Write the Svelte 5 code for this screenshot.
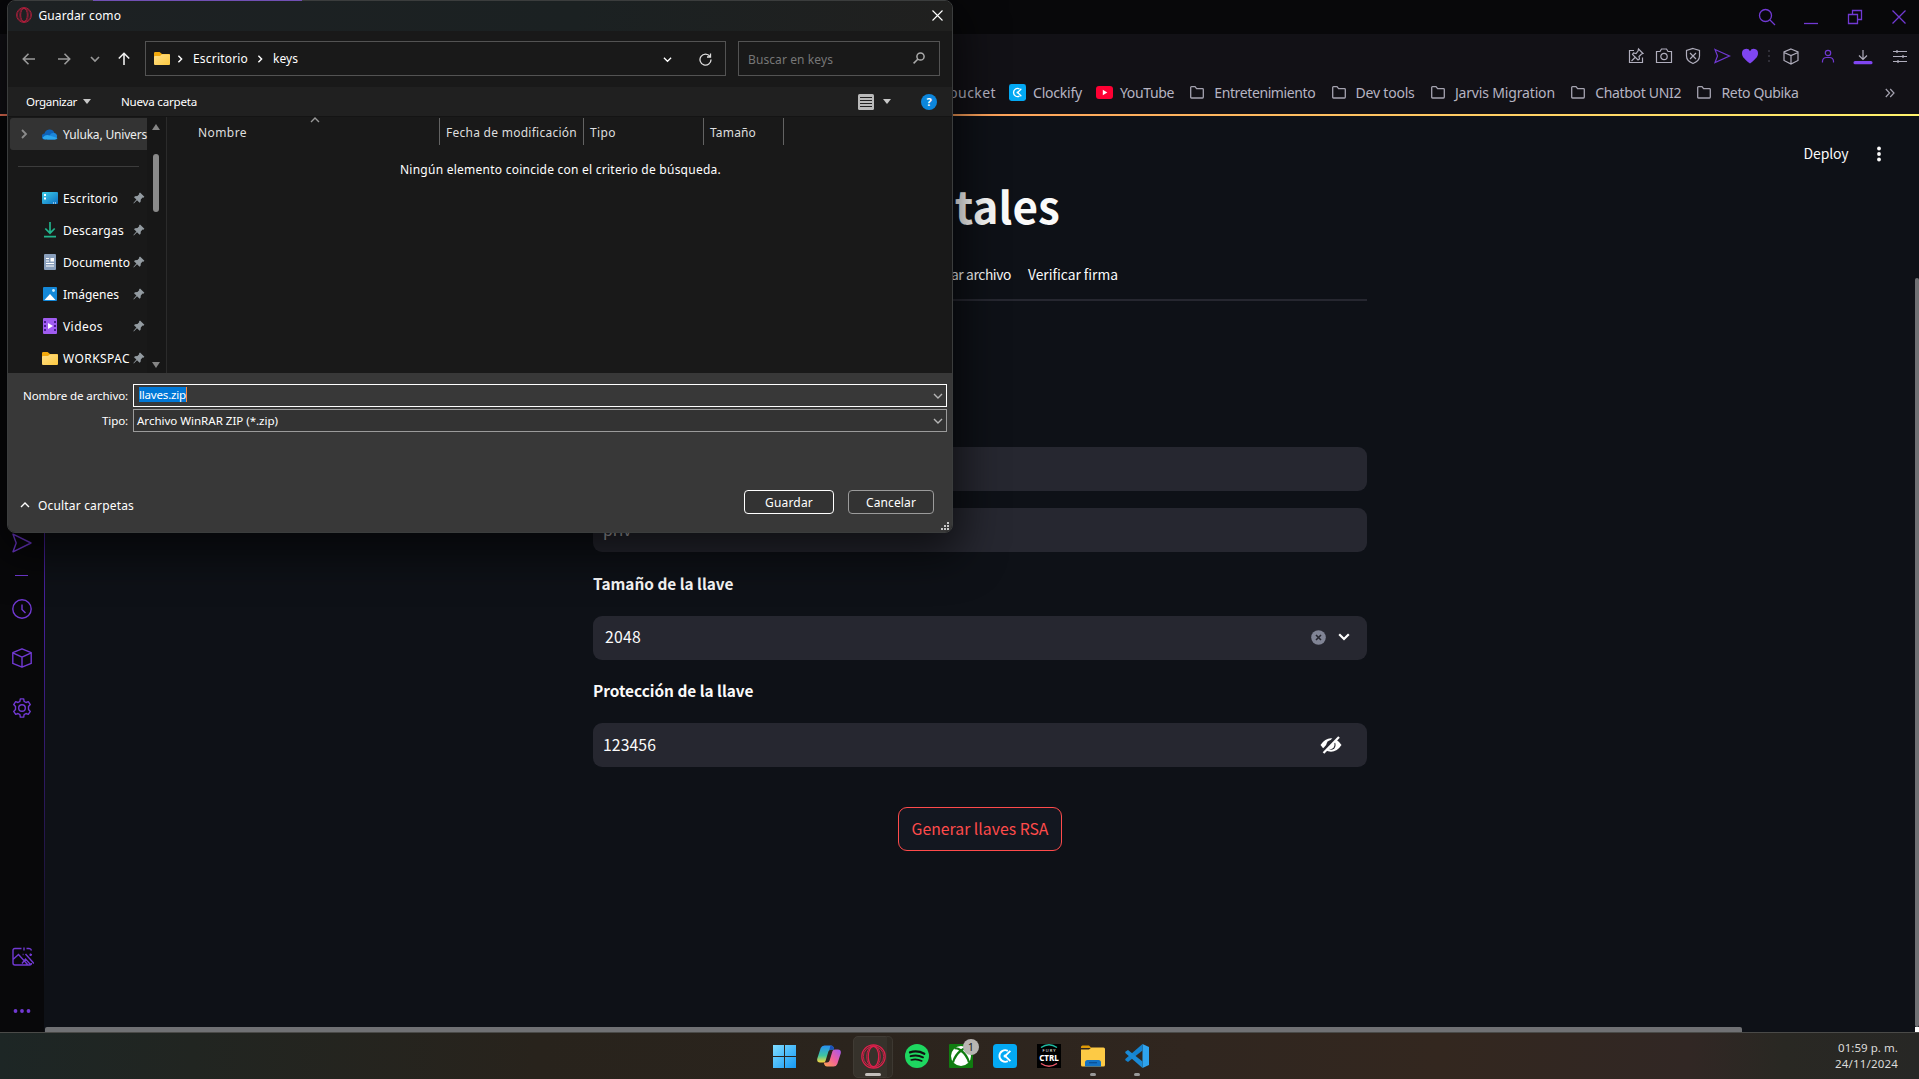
<script>
  const bookmarks = [
    { kind: 'clockify', label: 'Clockify', w: 49 },
    { kind: 'youtube', label: 'YouTube', w: 54 },
    { kind: 'folder', label: 'Entretenimiento', w: 101 },
    { kind: 'folder', label: 'Dev tools', w: 59 },
    { kind: 'folder', label: 'Jarvis Migration', w: 100 },
    { kind: 'folder', label: 'Chatbot UNI2', w: 86 },
    { kind: 'folder', label: 'Reto Qubika', w: 77 }
  ];
  const places = [
    { icon: 'desktop', label: 'Escritorio', w: 55 },
    { icon: 'download', label: 'Descargas', w: 61 },
    { icon: 'doc', label: 'Documento', w: 67 },
    { icon: 'image', label: 'Imágenes', w: 56 },
    { icon: 'video', label: 'Videos', w: 40 },
    { icon: 'folder', label: 'WORKSPAC', w: 67 }
  ];

  // Tracks a label so that it occupies the given width in pixels.
  function fit(node, width) {
    node.style.letterSpacing = '0px';
    const natural = node.getBoundingClientRect().width;
    const count = node.textContent.length;
    node.style.letterSpacing = (width - natural) / count + 'px';
  }
</script>

{#snippet folder()}
  <svg width="16" height="13" viewBox="0 0 16 13">
    <defs><linearGradient id="fg" x1="0" y1="0" x2="1" y2="1"><stop offset="0" stop-color="#ffe08a" /><stop offset="1" stop-color="#fdc940" /></linearGradient></defs>
    <path d="M0 1.2Q0 0 1.2 0H5.6L8 2H15Q16 2 16 3V6H0Z" fill="#f2a90c" />
    <path d="M0 5Q0 4 1 4H6L8 2.2H15Q16 2.2 16 3.2V12Q16 13 15 13H1Q0 13 0 12Z" fill="url(#fg)" />
  </svg>
{/snippet}

{#snippet send(s)}
  <svg width={s} height={s} viewBox="0 0 20 20" fill="none" stroke="#7139d3" stroke-width="1.4" stroke-linejoin="round"><path d="M1 1.2 19 10 1 18.8 4.2 10Z" /></svg>
{/snippet}

{#snippet cube(s, c)}
  <svg width={s} height={s} viewBox="0 0 20 20" fill="none" stroke={c} stroke-width="1.3" stroke-linejoin="round"><path d="M10 .8 19.2 4.6V15.4L10 19.2.8 15.4V4.6ZM.8 4.8 10 9.2 19.2 4.8M10 9.2V19" /></svg>
{/snippet}

{#snippet clockMark(s)}
  <svg width={s} height={s} viewBox="0 0 24 24"><rect width="24" height="24" rx="3.5" fill="#03a9f4" /><path d="M14.8 6.8A5.8 5.8 0 1 0 14.8 17.200" fill="none" stroke="#fff" stroke-width="1.9" /><path d="M12.600 11.600 17.400 6.800M12.600 12.400 17.400 17.200" stroke="#fff" stroke-width="1.800" /><circle cx="12" cy="12" r="1.5" fill="#fff" /></svg>
{/snippet}

{#snippet opera(s, c)}
  <svg width={s} height={s} viewBox="0 0 24 24" fill="none" stroke={c} stroke-width="1.2"><circle cx="12" cy="12" r="11.2" /><circle cx="12" cy="12" r="9.8" stroke-width=".8" /><ellipse cx="12" cy="12" rx="5" ry="9.8" /><ellipse cx="12" cy="12" rx="6.5" ry="10.6" stroke-width=".8" /></svg>
{/snippet}

{#snippet pin()}
  <svg class="pin" width="12" height="12" viewBox="0 0 12 12" fill="#939ba1"><path d="M7 .4 11.4 4.8 10.4 5.8 9.6 5.6 7.8 7.4 7.6 9.8 6.6 10.8 4 8.2.8 11.4.4 11 3.4 7.6 1 5.2 2 4.2 4.4 4 6.2 2.2 6 1.4Z" /></svg>
{/snippet}

{#snippet chev(cls)}
  <svg class={cls} width="10" height="10" viewBox="0 0 10 10" fill="none" stroke="currentColor" stroke-width="1.4"><path d="M1 3 5 7 9 3" /></svg>
{/snippet}

<div class="desktop">
  <div class="tabbar">
    <div class="tabmark"></div>
    <div class="winctl">
      <svg width="18" height="18" viewBox="0 0 18 18"><circle cx="7.5" cy="7.5" r="6" /><path d="M12 12 17 17" /></svg>
      <svg width="18" height="18" viewBox="0 0 18 18"><path d="M2 15.5H16" /></svg>
      <svg width="18" height="18" viewBox="0 0 18 18"><path d="M2.5 6.5H11.500V15.500H2.500ZM6.500 6V2.500H15.500V11.500H12" /></svg>
      <svg width="18" height="18" viewBox="0 0 18 18"><path d="M2.500 2.500 15.500 15.500M15.500 2.500 2.500 15.500" /></svg>
    </div>
  </div>

  <div class="nav">
    <div class="tools">
      <svg viewBox="0 0 20 20"><path d="M8 4.500H3.500V16.500H16.500V11.500M12.500 3 17 7.500 15.500 8 13 10.500 13.500 13 12 14 6.500 8.500 7.500 7 10 7.500 12 5ZM9 11.500 5.500 15" /></svg>
      <svg viewBox="0 0 20 20"><path d="M2.500 5.500H6L7.500 3H12.500L14 5.500H17.500V16.500H2.500Z" /><circle cx="10" cy="10.500" r="3.200" /></svg>
      <svg viewBox="0 0 20 20"><path d="M10 2.500 16.500 4.500V10Q16.500 15 10 17.500 3.500 15 3.500 10V4.500ZM7 7 13 13M13 7 7 13" /></svg>
      <svg class="vio" viewBox="0 0 20 20"><path d="M3 3.500 17.500 10 3 16.500 5.500 10Z" /></svg>
      <svg class="heart" viewBox="0 0 20 20"><path d="M10 17.500C3 12 2 10 2 7.200A4.200 4.200 0 0 1 10 5.200 4.200 4.200 0 0 1 18 7.200C18 10 17 12 10 17.500Z" /></svg>
      <i class="vdots"></i>
      <svg viewBox="0 0 20 20"><path d="M10 3 17 6V14.500L10 18 3 14.500V6ZM3 6.500 10 9.500 17 6.500M10 9.500V17.500" /></svg>
      <svg class="vio" viewBox="0 0 20 20"><circle cx="10" cy="7" r="2.700" /><path d="M4.500 16.500V15A4 4 0 0 1 8.500 11.500H11.500A4 4 0 0 1 15.500 15V16.500" /></svg>
      <svg viewBox="0 0 20 20"><path d="M10 4V13M6 9.500 10 13.500 14 9.500" /><rect class="bar" x=".5" y="15" width="19" height="3.200" rx="1.500" /></svg>
      <svg viewBox="0 0 20 20"><path d="M3 5.500H17M3 10.500H17M3 15.500H17M7 4V7M13 9V12M8 14V17" /></svg>
    </div>
    <div class="marks">
      <span class="mark tail"><span use:fit={66}>Bitbucket</span></span>
      {#each bookmarks as b}
        <span class="mark {b.kind}">
          {#if b.kind === 'clockify'}{@render clockMark(17)}
          {:else if b.kind === 'youtube'}<svg width="17" height="13" viewBox="0 0 17 13"><rect width="17" height="13" rx="3" fill="#ff0033" /><path d="M6.800 3.800V9.200L11.300 6.500Z" fill="#fff" /></svg>
          {:else}<svg width="14" height="13" viewBox="0 0 14 13"><path d="M.7 1.500Q.7.700 1.500.700H5L6.600 2.700H12.500Q13.300 2.700 13.300 3.500V11Q13.300 12 12.500 12H1.500Q.7 12 .7 11Z" fill="none" stroke="#a5a3b0" stroke-width="1.300" /></svg>{/if}
          <span use:fit={b.w}>{b.label}</span>
        </span>
      {/each}
      <svg class="more" width="10" height="10" viewBox="0 0 10 10" fill="none" stroke="#a5a3b0" stroke-width="1.200"><path d="M.8 1 4.600 5 .8 9M5.200 1 9 5 5.200 9" /></svg>
    </div>
  </div>
  <div class="rule"></div>

  <div class="body">
    <div class="side">
      <div class="s-send">{@render send(20)}</div>
      <div class="dash"></div>
      <svg width="20" height="20" viewBox="0 0 20 20"><circle cx="10" cy="10" r="9.200" /><path d="M10 5.500V10.500L13.500 14" /></svg>
      {@render cube(20, '#7139d3')}
      <svg width="20" height="20" viewBox="0 0 20 20"><circle cx="10" cy="10" r="3.300" /><path d="M8.300.900H11.700L12.100 3.400 14 4.500 16.300 3.600 18.300 6.600 16.500 8.500V11.500L18.300 13.400 16.300 16.400 14 15.500 12.100 16.600 11.700 19.100H8.300L7.900 16.600 6 15.500 3.700 16.400 1.700 13.400 3.500 11.500V8.500L1.700 6.600 3.700 3.600 6 4.500 7.900 3.400Z" stroke-linejoin="round" /></svg>
      <svg class="pic" width="22" height="20" viewBox="0 0 22 20"><path d="M9.500 1.500H3Q1 1.500 1 3.500V16Q1 18 3 18H17.500Q19.500 18 19.500 16M1 12.500 6.500 7.500 16 18M10 16.500 13.500 12 18.500 17.500M13.500 7 22 16.500M14.500 1.500H17Q19 1.500 19.500 3.500M12 .500V3.500M10.700 7.500H11.500M18.500 6.500V9M17.500 7.800H20" /></svg>
      <svg class="dots" width="20" height="6" viewBox="0 0 20 6"><circle cx="3.500" cy="3" r="1.900" /><circle cx="10" cy="3" r="1.900" /><circle cx="16.500" cy="3" r="1.900" /></svg>
    </div>

    <div class="page">
      <div class="head">
        <span use:fit={45}>Deploy</span>
        <svg width="4" height="16" viewBox="0 0 4 16" fill="#fafafa"><circle cx="2" cy="2.500" r="1.900" /><circle cx="2" cy="8" r="1.900" /><circle cx="2" cy="13.500" r="1.900" /></svg>
      </div>
      <main>
        <h1><span use:fit={187}>digitales</span></h1>
        <div class="tabs"><span use:fit={88}>Firmar archivo</span><span use:fit={90}>Verificar firma</span></div>
        <div class="field first"></div>
        <div class="field second"><span>priv</span></div>
        <div class="label"><span use:fit={140.5}>Tamaño de la llave</span></div>
        <div class="field select">
          <span use:fit={36}>2048</span>
          <svg width="15" height="15" viewBox="0 0 15 15"><circle cx="7.500" cy="7.500" r="7.300" fill="#808495" /><path d="M5 5 10 10M10 5 5 10" stroke="#262730" stroke-width="1.600" /></svg>
          <svg width="12" height="8" viewBox="0 0 12 8"><path d="M1.200 1.200 6 6 10.800 1.200" fill="none" stroke="#fff" stroke-width="2.200" /></svg>
        </div>
        <div class="label prot"><span use:fit={160.5}>Protección de la llave</span></div>
        <div class="field pass">
          <span use:fit={53}>123456</span>
          <svg width="22" height="18" viewBox="0 0 22 18"><path d="M.5 9Q5 2.200 11 2.200T21.500 9Q17 15.800 11 15.800T.5 9Z" fill="#fff" /><ellipse cx="11" cy="9" rx="4.600" ry="4.800" fill="#262730" /><path d="M7.500 14.500 14 6.500Q15.500 10 12.500 12.500Z" fill="#fff" /><path d="M2 16.500 17.500-.5" stroke="#262730" stroke-width="4" /><path d="M3.500 17 19 1" stroke="#fff" stroke-width="2.200" /></svg>
        </div>
        <div class="gen"><button><span use:fit={137}>Generar llaves RSA</span></button></div>
      </main>
      <div class="hscroll"></div>
      <div class="vscroll"></div>
      <div class="corner"></div>
    </div>
  </div>

  <div class="taskbar">
    <div class="apps">
      <div class="app"><svg width="23" height="23" viewBox="0 0 23 23"><defs><linearGradient id="wn" x1="0" y1="0" x2="1" y2="1"><stop offset="0" stop-color="#7fdcff" /><stop offset="1" stop-color="#1599f5" /></linearGradient></defs><path d="M0 0H11V11H0ZM12 0H23V11H12ZM0 12H11V23H0ZM12 12H23V23H12Z" fill="url(#wn)" /></svg></div>
      <div class="app"><svg width="24" height="24" viewBox="0 0 24 24">
        <defs>
          <linearGradient id="ca" x1="0" y1="0" x2="0" y2="1"><stop offset="0" stop-color="#2790f5" /><stop offset=".6" stop-color="#3fc5a0" /><stop offset="1" stop-color="#ffd83a" /></linearGradient>
          <linearGradient id="cb" x1="1" y1="0" x2="0" y2="1"><stop offset="0" stop-color="#a358f0" /><stop offset=".5" stop-color="#f0609c" /><stop offset="1" stop-color="#ffa64a" /></linearGradient>
        </defs>
        <path d="M7.500 1.500H14Q16 1.500 16.700 3.500L17.200 5.500H14Q12 5.500 11.400 7.500L8.500 17Q7.900 18.500 6 18.500H3Q-.5 18.500.3 14.500L3.700 4Q4.700 1.500 7.500 1.500Z" fill="url(#ca)" />
        <path d="M16.500 22.500H10Q8 22.500 7.300 20.500L6.800 18.500H10Q12 18.500 12.600 16.500L15.500 7Q16.100 5.500 18 5.500H21Q24.500 5.500 23.700 9.500L20.300 20Q19.300 22.500 16.500 22.500Z" fill="url(#cb)" />
        <path d="M14 1.500Q16 1.500 16.700 3.500L17.300 5.500H14.500Q12.500 5.500 12 7L13.500 1.500Z" fill="#1d4fb8" />
      </svg></div>
      <div class="app active">{@render opera(25, '#e01f4c')}<i class="ind wide"></i></div>
      <div class="app"><svg width="24" height="24" viewBox="0 0 24 24"><circle cx="12" cy="12" r="12" fill="#1ed760" /><g fill="none" stroke="#111" stroke-linecap="round"><path d="M5 8.300Q12.500 6 19.300 9.700" stroke-width="2.300" /><path d="M5.600 12.200Q12 10.300 18 13.300" stroke-width="1.900" /><path d="M6.200 15.900Q11.800 14.400 16.800 17" stroke-width="1.600" /></g></svg></div>
      <div class="app xbox"><svg width="24" height="24" viewBox="0 0 24 24"><rect width="24" height="24" rx="1" fill="#107c10" /><circle cx="12" cy="12" r="10" fill="#fff" /><path d="M5.500 4.500Q8 3.500 12 6.500 16 3.500 18.500 4.500M12 6.500Q6 11 4 18.500M12 6.500Q18 11 20 18.500" stroke="#107c10" stroke-width="2.200" fill="none" /></svg><b>1</b></div>
      <div class="app">{@render clockMark(24)}</div>
      <div class="app"><div class="ctrl"><svg width="18" height="4" viewBox="0 0 18 4"><path d="M1 3.500Q9-2 17 3.500" fill="none" stroke="#1fb9a0" stroke-width="1.400" /></svg><small>F U R Y</small><strong>CTRL</strong><svg width="18" height="4" viewBox="0 0 18 4"><path d="M1 .5Q9 6 17 .5" fill="none" stroke="#ec5a6a" stroke-width="1.400" /></svg></div></div>
      <div class="app"><svg width="24" height="24" viewBox="0 0 24 24"><path d="M0 3Q0 1.500 1.500 1.500H8L10.500 4H0Z" fill="#e09a06" /><path d="M0 5.500H8L10.500 3.500H22.500Q24 3.500 24 5V21Q24 22.500 22.500 22.500H1.500Q0 22.500 0 21Z" fill="#fdca45" /><path d="M4 22.500V18.500Q4 16 6.500 16H17.500Q20 16 20 18.500V22.500Z" fill="#1272c4" /><path d="M8 18.700H16" stroke="#0b4d92" stroke-width="1.200" /></svg><i class="ind"></i></div>
      <div class="app"><svg width="24" height="24" viewBox="0 0 24 24"><path d="M17.500 0 24 3V21L17.500 24Z" fill="#2ea3ee" /><path d="M17.500 0V6.500L3 18 .3 16.200V15Z" fill="#1382cf" /><path d="M17.500 24V17.500L3 6 .3 7.800V9Z" fill="#1a8ad6" /></svg><i class="ind"></i></div>
    </div>
    <div class="clock"><span use:fit={60}>01:59 p. m.</span><span use:fit={63}>24/11/2024</span></div>
  </div>

  <div class="dialog">
    <div class="title">
      {@render opera(16, '#c51f40')}
      <span use:fit={82.5}>Guardar como</span>
      <svg class="x" width="11" height="11" viewBox="0 0 11 11" stroke="#fff" stroke-width="1.100"><path d="M.5.500 10.500 10.500M10.500.500.500 10.500" /></svg>
    </div>
    <div class="addr">
      <div class="arrows">
        <svg width="14" height="14" viewBox="0 0 14 14"><path d="M13 7H1.500M6.500 1.800 1.300 7 6.500 12.200" /></svg>
        <svg width="14" height="14" viewBox="0 0 14 14"><path d="M1 7H12.500M7.500 1.800 12.700 7 7.500 12.200" /></svg>
        {@render chev('hist')}
        <svg class="up" width="14" height="14" viewBox="0 0 14 14"><path d="M7 13V1.500M1.800 6.500 7 1.300 12.200 6.500" /></svg>
      </div>
      <div class="path">
        {@render folder()}
        {@render chev('right a')}
        <span use:fit={55}>Escritorio</span>
        {@render chev('right b')}
        <span use:fit={25}>keys</span>
        {@render chev('open')}
        <svg class="refresh" width="13" height="13" viewBox="0 0 13 13" fill="none" stroke="#ddd" stroke-width="1.300"><path d="M11 3.500A5.500 5.500 0 1 0 12 6.500M11.500.500V4H8" /></svg>
      </div>
      <div class="find">
        <span use:fit={85}>Buscar en keys</span>
        <svg width="12" height="12" viewBox="0 0 12 12" fill="none" stroke="#aaa" stroke-width="1.500"><circle cx="7.500" cy="4.500" r="3.600" /><path d="M5 7 .6 11.400" /></svg>
      </div>
    </div>
    <div class="cmd">
      <span use:fit={51}>Organizar</span><i class="tri"></i>
      <span class="new" use:fit={76}>Nueva carpeta</span>
      <svg class="view" width="16" height="16" viewBox="0 0 16 16"><rect width="16" height="16" rx="1.500" fill="#b9b9b9" /><path d="M2 3.500H14M2 6.500H14M2 9.500H14M2 12.500H14" stroke="#202020" /></svg>
      <i class="tri"></i>
      <span class="help">?</span>
    </div>
    <div class="files">
      <div class="tree">
        <div class="entry hot">
          {@render chev('right')}
          <svg width="16" height="11" viewBox="0 0 16 11"><path d="M3 10.500A3 3 0 0 1 2.500 4.500 5.200 5.200 0 0 1 12.300 3.500L9 8Z" fill="#0f62b8" /><path d="M5 10.500 9 4.500 12 3.800A3.500 3.500 0 0 1 13 10.500Z" fill="#1b86db" /><path d="M3.200 10.500Q1 10.500.6 8.500 4 5 7.500 6.500L15.500 9Q14.500 10.500 13 10.500Z" fill="#2ba6ee" /></svg>
          <span use:fit={84}>Yuluka, Univers</span>
        </div>
        <div class="sep"></div>
        {#each places as p}
          <div class="entry">
            <div class="ico">
              {#if p.icon === 'desktop'}<svg width="16" height="12" viewBox="0 0 16 12"><defs><linearGradient id="dk" x1="0" y1="0" x2="1" y2="1"><stop offset="0" stop-color="#3fd0e8" /><stop offset="1" stop-color="#0c6fc4" /></linearGradient></defs><rect width="16" height="12" rx="1" fill="url(#dk)" /><path d="M2 2H4V4H2ZM2 5.500H4V7.500H2Z" fill="#fff" /><path d="M11 11H12M13 11H14" stroke="#fff" /></svg>
              {:else if p.icon === 'download'}<svg width="12" height="16" viewBox="0 0 12 16" fill="none" stroke="#22b38c" stroke-width="1.700"><path d="M6 0V11M1.300 6.500 6 11.200 10.700 6.500M0 14.700H12" /></svg>
              {:else if p.icon === 'doc'}<svg width="12" height="16" viewBox="0 0 12 16"><rect width="12" height="16" rx="1" fill="#8aa0bd" /><path d="M2 4.500H5M2 7H5M2 9.500H10M2 12H10" stroke="#fff" /><rect x="6.500" y="4" width="3.500" height="3.500" fill="#fff" /></svg>
              {:else if p.icon === 'image'}<svg width="14" height="14" viewBox="0 0 14 14"><rect width="14" height="14" rx="1" fill="#1488d8" /><path d="M1.500 13 7 7 12.500 13Z" fill="#fff" /><circle cx="10.500" cy="3.500" r="1.400" fill="#cdeeff" /></svg>
              {:else if p.icon === 'video'}<svg width="14" height="16" viewBox="0 0 14 16"><rect width="14" height="16" rx="1" fill="#a05cf0" /><path d="M1 3H3V5H1ZM1 7H3V9H1ZM1 11H3V13H1ZM11 3H13V5H11ZM11 7H13V9H11ZM11 11H13V13H11Z" fill="#4a1e90" /><path d="M5 5V11L10 8Z" fill="#fff" /></svg>
              {:else}{@render folder()}{/if}
            </div>
            <span use:fit={p.w}>{p.label}</span>
            {@render pin()}
          </div>
        {/each}
      </div>
      <div class="track"><i class="tri top"></i><div class="thumb"></div><i class="tri bot"></i></div>
      <div class="list">
        <div class="cols">
          <div class="c1"><span use:fit={49}>Nombre</span>{@render chev('sort')}</div>
          <div class="c2"><span use:fit={131}>Fecha de modificación</span></div>
          <div class="c3"><span use:fit={26}>Tipo</span></div>
          <div class="c4"><span use:fit={46}>Tamaño</span></div>
        </div>
        <div class="empty"><span use:fit={321}>Ningún elemento coincide con el criterio de búsqueda.</span></div>
      </div>
    </div>
    <div class="foot">
      <div class="row"><label for="fname"><span use:fit={105}>Nombre de archivo:</span></label><div class="combo on" id="fname"><mark><span use:fit={47}>llaves.zip</span></mark>{@render chev('drop')}</div></div>
      <div class="row"><label for="ftype"><span use:fit={26}>Tipo:</span></label><div class="combo" id="ftype"><span use:fit={141}>Archivo WinRAR ZIP (*.zip)</span>{@render chev('drop')}</div></div>
      <div class="actions">
        {@render chev('hide')}
        <span use:fit={96}>Ocultar carpetas</span>
        <button class="ok"><span use:fit={48}>Guardar</span></button>
        <button class="no"><span use:fit={50}>Cancelar</span></button>
      </div>
      <svg class="grip" width="8" height="8" viewBox="0 0 8 8" fill="#c8c8c8"><path d="M6 0H8V2H6ZM3 3H5V5H3ZM6 3H8V5H6ZM0 6H2V8H0ZM3 6H5V8H3ZM6 6H8V8H6Z" /></svg>
    </div>
  </div>
</div>

<style>
  :global(body) { background: #0e1117; overflow: hidden; }
  * { box-sizing: border-box; }
  svg { display: block; flex: none; }
  span { white-space: nowrap; }
  button { background: none; padding: 0; font: inherit; }
  .desktop { position: relative; width: 1919px; height: 1079px; overflow: hidden; display: flex; flex-direction: column; font-family: "Noto Sans", sans-serif; font-size: 12px; }

  .tabbar { height: 34px; background: #08080a; display: flex; align-items: flex-start; }
  .tabmark { margin-left: 93px; width: 209px; height: 1px; background: #7150b4; position: relative; z-index: 2; }
  .winctl { margin: 8px 11px 0 auto; display: flex; gap: 26px; }
  .winctl svg { fill: none; stroke: #7139d3; stroke-width: 1.3; }
  .nav { height: 80px; background: #121116; }
  .tools { display: flex; align-items: center; justify-content: flex-end; height: 44px; padding-right: 9px; }
  .tools svg { width: 20px; height: 20px; fill: none; stroke: #b0aebd; stroke-width: 1.2; margin-left: 8px; }
  .tools svg:nth-child(3), .tools svg:nth-child(4) { margin-left: 9px; }
  .tools svg:nth-child(7) { margin-left: 11px; }
  .tools svg:nth-child(8), .tools svg:nth-child(10) { margin-left: 17px; }
  .tools svg:nth-child(9) { margin-left: 15px; }
  .tools .vio { stroke: #7139d3; }
  .tools .heart { fill: #7f45f0; stroke: none; }
  .tools .bar { fill: #7f45f0; stroke: none; }
  .vdots { width: 2px; height: 12px; margin-left: 8px; background: repeating-linear-gradient(#302f38 0 2px, transparent 2px 5px); }
  .marks { display: flex; align-items: center; height: 29px; padding-left: 930px; font-size: 14px; color: #b6b4c2; }
  .mark { display: flex; align-items: center; }
  .mark.clockify { margin-left: 13px; gap: 7px; }
  .mark.youtube { margin-left: 14px; gap: 7px; }
  .mark.folder { margin-left: 16.3px; gap: 10px; }
  .more { margin-left: auto; margin-right: 24px; }
  .rule { height: 2px; background: linear-gradient(90deg, #ff7a5c, #fda05a 50%, #fff36c); }

  .body { display: flex; height: 916px; background: #0e1117; }
  .side { width: 45px; background: linear-gradient(#08080a, #08080a) 0 0 / 44px 100% no-repeat, linear-gradient(#46209a 55%, #0e1117 95%); padding: 417px 0 0 11.5px; display: flex; flex-direction: column; }
  .side > svg { fill: none; stroke: #7139d3; stroke-width: 1.4; margin-top: 29.5px; }
  .dash { width: 13px; height: 1px; margin: 22px 0 -7px 3px; background: #7139d3; }
  .side > .pic { margin-top: 229px; }
  .side > .dots { margin-top: 41px; fill: #7139d3; stroke: none; }

  .page { position: relative; width: 1874px; height: 916px; font-family: "Noto Sans CJK SC", sans-serif; color: #fafafa; }
  .head { padding: 16px 38px 0 0; height: 60px; display: flex; align-items: center; justify-content: flex-end; gap: 28.5px; font-size: 14px; line-height: 20px; }
  .head span { margin-top: -2px; }
  main { width: 774px; margin-left: 548px; display: flex; flex-direction: column; font-size: 15.8px; line-height: 24px; }
  h1 { margin: -2px 0 0; padding-left: 280px; height: 62px; line-height: 62px; font-size: 44px; font-weight: 700; }
  .tabs { margin-top: 15px; height: 50px; border-bottom: 2px solid #262730; padding: 0 0 2px 330px; display: flex; align-items: center; gap: 17px; font-size: 13.8px; }
  .field { height: 44px; border-radius: 9px; background: #262730; padding: 0 25px 0 10px; display: flex; align-items: center; }
  .first { margin-top: 146px; }
  .second { margin-top: 17px; color: #b9b9bd; }
  .label { height: 64px; display: flex; align-items: center; font-weight: 700; font-size: 15.4px; padding-bottom: 2px; }
  .prot { height: 63px; padding-bottom: 3px; }
  .select { padding: 0 17px 2px 12px; }
  .select svg:first-of-type { margin-left: auto; margin-right: 12px; }
  .pass svg { margin-left: auto; }
  .gen { display: flex; margin: 40px 0 0 305px; }
  .gen button { width: 164px; height: 44px; border: 1px solid #ff4b4b; border-radius: 9px; background: #131720; color: #ff4b4b; line-height: 24px; }
  .hscroll { position: absolute; left: 0; bottom: 0; width: 1697px; height: 5px; background: #707174; border-radius: 2px 2px 0 0; }
  .vscroll { position: absolute; right: 0; top: 162px; width: 4px; height: 749px; background: #707174; border-radius: 2px; }
  .corner { position: absolute; right: 0; bottom: 0; width: 4px; height: 5px; background: #fff; }

  .taskbar { height: 47px; border-top: 1px solid #4a4a48; background: linear-gradient(90deg, #1d2625, #212521 10%, #28231c 28%, #2b241d 45%, #30261f 62%, #33271f 75%, #312724 88%, #292823 93%, #272725); display: flex; justify-content: space-between; }
  .apps { display: flex; margin-left: 763px; }
  .app { position: relative; width: 44px; height: 46px; display: flex; align-items: center; justify-content: center; }
  .app:first-child { padding-right: 1px; }
  .active::before { content: ""; position: absolute; left: 2px; top: 3px; width: 35px; height: 40px; border-radius: 5px; background: #36322b; border: 1px solid #403b34; }
  .active::after { content: ""; position: absolute; left: 36px; top: 3px; width: 5px; height: 40px; border-radius: 0 5px 5px 0; background: #302b24; border: 1px solid #3d3831; border-left: 0; }
  .active svg { position: relative; z-index: 1; }
  .ind { position: absolute; bottom: 3px; width: 6px; height: 3px; border-radius: 2px; background: #999; }
  .ind.wide { width: 16px; background: #c4c0bc; }
  .xbox b { position: absolute; left: 24px; top: 6px; width: 16px; height: 16px; border-radius: 50%; background: #b8b5b2; color: #222; font: 11px/16px "Noto Sans", sans-serif; text-align: center; }
  .ctrl { width: 24px; height: 24px; background: #000; color: #fff; display: flex; flex-direction: column; align-items: center; }
  .ctrl small { font-size: 4px; line-height: 5px; }
  .ctrl strong { font-size: 8px; line-height: 10px; font-weight: 800; }
  .clock { display: flex; flex-direction: column; align-items: flex-end; padding: 7px 21px 0 0; font-size: 11.5px; line-height: 16px; color: #dcdcda; }

  .dialog { position: absolute; left: 7px; top: 0; width: 946px; height: 533px; border: 1px solid #3b3d3d; border-radius: 8px; overflow: hidden; background: #191919; color: #fff; box-shadow: 0 14px 44px 8px rgba(0, 0, 0, .6); display: flex; flex-direction: column; }
  .title { height: 30px; background: linear-gradient(90deg, #1d2123, #1b2122 60%, #20201f); display: flex; align-items: center; padding: 0 9px 2px 8px; }
  .title span { margin-left: 6.5px; }
  .x { margin-left: auto; }
  .addr { height: 56px; display: flex; align-items: flex-start; padding-top: 10px; font-size: 12px; }
  .arrows { width: 137px; height: 35px; display: flex; align-items: center; padding-left: 14px; color: #aaa; }
  .arrows svg { fill: none; stroke: #999; stroke-width: 1.6; }
  .arrows svg:nth-child(2) { margin-left: 21px; }
  .arrows .hist { margin-left: 19px; }
  .arrows .up { margin-left: 17px; stroke: #eee; }
  .path { width: 581px; height: 35px; border: 1px solid #535353; display: flex; align-items: center; padding: 0 13px 0 8px; }
  .find { width: 202px; height: 35px; margin-left: 12px; border: 1px solid #535353; display: flex; align-items: center; justify-content: space-between; padding: 2px 14px 0 9px; color: #777; }
  .find svg { margin-top: -3px; }
  .right { transform: rotate(-90deg); width: 8px; height: 8px; stroke-width: 1.8; }
  .a { margin: 0 9px 0 6px; }
  .b { margin: 0 9px 0 8px; }
  .open { margin-left: auto; position: relative; top: 1px; width: 9px; height: 9px; }
  .refresh { margin: 2px 0 0 27px; }
  .cmd { height: 30px; background: #202020; border-bottom: 1px solid #141414; display: flex; align-items: center; padding: 0 15px 0 18px; font-size: 11.6px; }
  .tri { border: 4px solid transparent; border-top: 5px solid #c8c8c8; border-bottom: 0; }
  .cmd .tri { margin-left: 6px; }
  .new { margin-left: 30px; }
  .view { margin-left: auto; }
  .view + .tri { margin-left: 9px; }
  .help { width: 16px; height: 16px; border-radius: 50%; margin-left: 30px; background: #0c86dc; font: 700 11px/16px "Noto Sans", sans-serif; text-align: center; }
  .files { height: 256px; display: flex; }
  .tree { width: 139px; padding: 1px 0 0 2px; display: flex; flex-direction: column; }
  .entry { height: 32px; display: flex; align-items: center; padding-left: 32px; flex: none; position: relative; }
  .hot { background: #333; border-radius: 3px 0 0 3px; padding-left: 9px; color: #eee; }
  .hot svg:first-child { margin-right: 13px; color: #8c8c8c; width: 10px; height: 10px; }
  .hot span { margin-left: 5px; }
  .sep { height: 1px; margin: 16px 8px 15px; background: #3c3c3c; flex: none; }
  .ico { width: 16px; display: flex; justify-content: center; margin-right: 5px; }
  .pin { position: absolute; left: 123px; }
  .track { width: 20px; border-right: 1px solid #2b2b2b; background: #171717; display: flex; flex-direction: column; align-items: center; padding: 7px 1.5px 5px 0; }
  .track .tri { border-top-color: #858585; border-top-width: 6px; }
  .top { transform: rotate(180deg); }
  .thumb { width: 6px; height: 58px; margin-top: 24px; border-radius: 3px; background: #8a8a8a; }
  .bot { margin-top: auto; }
  .list { flex: 1; }
  .cols { display: flex; height: 28px; padding-top: 1px; color: #dedede; }
  .cols div { border-right: 1px solid #636363; display: flex; align-items: center; padding: 2px 0 0 6px; height: 27px; }
  .cols .c1 { width: 273px; padding-left: 31px; position: relative; }
  .c2 { width: 144px; }
  .c3 { width: 120px; }
  .c4 { width: 80px; }
  .sort { position: absolute; left: 143px; top: -3px; transform: rotate(180deg); color: #999; }
  .empty { padding: 17px 0 0 233px; line-height: 16px; }
  .foot { position: relative; flex: 1; background: #383838; padding-top: 11px; font-size: 11.6px; }
  .row { display: flex; align-items: center; height: 23px; margin-bottom: 2px; }
  label { width: 120px; text-align: right; }
  .combo { width: 814px; height: 23px; margin-left: 5px; border: 1px solid #9b9b9b; background: #333; display: flex; align-items: center; justify-content: space-between; padding: 0 3px 0 3px; }
  .on { border-color: #fff; background: #383838; padding-left: 5px; }
  mark { background: #0078d7; color: #fff; line-height: 15px; height: 15px; border-right: 1px solid #ff8a3c; margin-bottom: 2px; }
  .drop { color: #b5b5b5; }
  .actions { display: flex; align-items: center; height: 24px; margin: 58px 18px 0 12px; font-size: 12px; }
  .actions > span { margin: 6px 0 0 8px; }
  .hide { transform: rotate(180deg); margin-top: 6px; }
  .ok, .no { height: 24px; border: 1px solid #9b9b9b; border-radius: 4px; background: #333; color: #fff; }
  .ok { width: 90px; margin-left: auto; border-color: #fff; }
  .no { width: 86px; margin-left: 14px; }
  .grip { position: absolute; right: 3px; bottom: 2px; }
</style>
